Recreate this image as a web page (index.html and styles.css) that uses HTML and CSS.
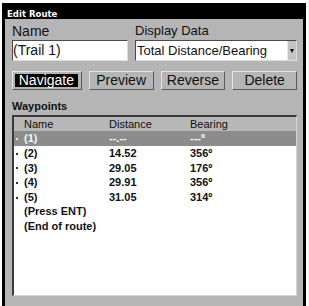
FILE: index.html
```html
<!DOCTYPE html>
<html lang="en">
  <head>
    <meta charset="utf-8">
    <title>Edit Route</title>
    <link rel="stylesheet" href="styles.css">
  </head>
  <body>
    <div class="window">
      <div class="titlebar">Edit Route</div>
      <div class="panel">
        <div class="fields">
          <div class="field">
            <div class="label">Name</div>
            <div class="textbox">(Trail 1)</div>
          </div>
          <div class="field">
            <div class="label small">Display Data</div>
            <div class="textbox dropdown">
              <span class="value">Total Distance/Bearing</span>
              <span class="arrow"></span>
            </div>
          </div>
        </div>

        <div class="buttons">
          <div class="btn active"><span>Navigate</span></div>
          <div class="btn"><span>Preview</span></div>
          <div class="btn"><span>Reverse</span></div>
          <div class="btn"><span>Delete</span></div>
        </div>

        <div class="section-label">Waypoints</div>
        <div class="list">
          <div class="row head"><span class="name">Name</span><span>Distance</span><span>Bearing</span></div>
          <div class="row selected"><span class="name"><i class="dot"></i>(1)</span><span>--.--</span><span>---º</span></div>
          <div class="row"><span class="name"><i class="dot"></i>(2)</span><span>14.52</span><span>356º</span></div>
          <div class="row"><span class="name"><i class="dot"></i>(3)</span><span>29.05</span><span>176º</span></div>
          <div class="row"><span class="name"><i class="dot"></i>(4)</span><span>29.91</span><span>356º</span></div>
          <div class="row"><span class="name"><i class="dot"></i>(5)</span><span>31.05</span><span>314º</span></div>
          <div class="row note"><span class="name">(Press ENT)</span></div>
          <div class="row note"><span class="name">(End of route)</span></div>
        </div>
      </div>
    </div>
  </body>
</html>
```

FILE: styles.css
```css
* {
margin: 0;
padding: 0;
box-sizing: border-box;
}

body {
background: #fff;
color: #111;
font-family: "Liberation Sans", Arial, sans-serif;
}

.window {
width: 304px;
height: 310px;
margin: 3px 0 0 2px;
background: #b5b5b5;
border-left: 3px solid #000;
border-right: 3px solid #000;
}

.titlebar {
height: 16px;
padding: 6px 0 0 2px;
background: #000;
color: #fff;
font-family: "Liberation Sans Narrow", "DejaVu Sans Condensed", sans-serif;
font-weight: bold;
font-size: 9.5px;
line-height: 10px;
}

.panel {
padding: 4px 6px 0 7px;
}

.fields {
display: grid;
grid-template-columns: 116px 1fr;
column-gap: 7px;
}

.label {
font-size: 14px;
line-height: 16px;
margin-bottom: 1px;
}

.label.small {
font-size: 13px;
}

.textbox {
height: 21px;
background: #fff;
border: 1px solid;
border-color: #4a4a4a #dcdcdc #dcdcdc #4a4a4a;
font-size: 14px;
line-height: 19px;
white-space: nowrap;
overflow: hidden;
}

.dropdown {
display: flex;
font-size: 13px;
padding-left: 1px;
}

.dropdown .value {
flex: 1;
}

.dropdown .arrow {
width: 9px;
background: #c4c4c4;
border-left: 1px solid #e8e8e8;
display: flex;
align-items: center;
justify-content: center;
}

.dropdown .arrow::before {
content: "";
border-left: 2px solid transparent;
border-right: 2px solid transparent;
border-top: 4px solid #111;
}

.buttons {
display: flex;
gap: 7px;
margin-top: 10px;
}

.btn {
flex: 1;
height: 19px;
border: 1px solid;
border-color: #e4e4e4 #5a5a5a #5a5a5a #e4e4e4;
text-align: center;
font-size: 14px;
line-height: 17px;
}

.btn.active {
padding: 2px 3px 2px 2px;
}

.btn.active span {
display: block;
height: 13px;
line-height: 13px;
background: #000;
color: #fff;
}

.section-label {
margin-top: 10px;
margin-bottom: 2px;
font-size: 11px;
font-weight: bold;
line-height: 13px;
}

.list {
height: 181px;
background: #fff;
border-top: 2px solid #3a3a3a;
border-left: 2px solid #3a3a3a;
border-right: 1px solid #d6d6d6;
border-bottom: 1px solid #d6d6d6;
}

.row {
display: grid;
grid-template-columns: 95px 81px 1fr;
height: 14.6px;
font-size: 11px;
line-height: 14.6px;
font-weight: bold;
white-space: nowrap;
}

.row .name {
display: flex;
align-items: center;
padding-left: 2px;
}

.row .dot {
width: 2px;
height: 2px;
margin: 1px 6px 0 0;
background: #333;
}

.row.head {
height: 14px;
line-height: 14px;
background: #b8b8b8;
font-weight: normal;
}

.row.head .name {
padding-left: 10px;
}

.row.selected {
height: 15px;
line-height: 15px;
background: #8c8c8c;
color: #f4f4f4;
}

.row.selected .dot {
background: #e0e0e0;
}

.row.note .name {
padding-left: 10px;
}
```
